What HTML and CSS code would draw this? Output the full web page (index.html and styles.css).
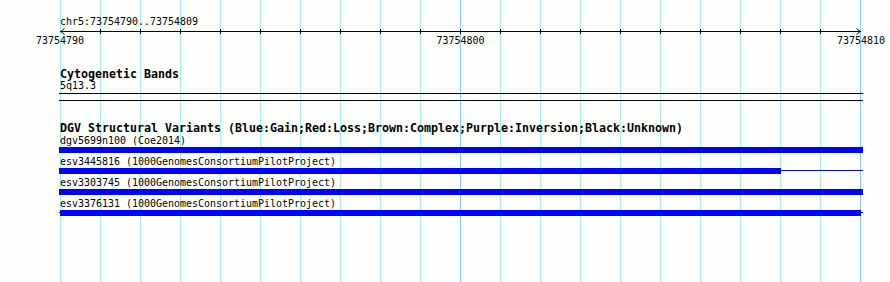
FILE: index.html
```html
<!DOCTYPE html>
<html lang="en">
<head>
  <meta charset="UTF-8" />
  <title>chr5:73754790..73754809</title>
  <meta name="viewport" content="width=device-width, initial-scale=1.0" />
  <link rel="stylesheet" href="styles.css">
</head>
<body>
  <div class="panel">
    <div class="grid">
      <div class="ruler">
        <div class="ruler-title">chr5:73754790..73754809</div>
        <svg class="ruler-axis" width="801" height="7" viewBox="0 0 801 7">
          <line x1="0" y1="3.5" x2="801" y2="3.5" stroke="#000" stroke-width="1" />
          <path id="ticks" d="" stroke="#000" stroke-width="1" fill="none" />
          <polyline points="4.5,0.5 0.8,3.5 4.5,6.5" stroke="#000" stroke-width="1" fill="none" />
          <polyline points="796.5,0.5 800.2,3.5 796.5,6.5" stroke="#000" stroke-width="1" fill="none" />
        </svg>
        <div class="ruler-labels">
          <span>73754790</span>
          <span>73754800</span>
          <span>73754810</span>
        </div>
      </div>

      <div class="track track-cyto">
        <div class="track-title">Cytogenetic Bands</div>
        <div class="feature-label">5q13.3</div>
        <div class="band"></div>
      </div>

      <div class="track track-dgv">
        <div class="track-title">DGV Structural Variants (Blue:Gain;Red:Loss;Brown:Complex;Purple:Inversion;Black:Unknown)</div>

        <div class="variant">
          <div class="variant-label">dgv5699n100 (Coe2014)</div>
          <div class="bar-row"><div class="bar" style="width:804px"></div></div>
        </div>
        <div class="variant">
          <div class="variant-label">esv3445816 (1000GenomesConsortiumPilotProject)</div>
          <div class="bar-row thin"><div class="bar" style="width:722px"></div></div>
        </div>
        <div class="variant">
          <div class="variant-label">esv3303745 (1000GenomesConsortiumPilotProject)</div>
          <div class="bar-row"><div class="bar" style="width:804px"></div></div>
        </div>
        <div class="variant">
          <div class="variant-label">esv3376131 (1000GenomesConsortiumPilotProject)</div>
          <div class="bar-row thin"><div class="bar" style="margin-left:1px;width:801px"></div></div>
        </div>
      </div>
    </div>
  </div>

  <script>
    // minor ticks every 40px between the two arrow ends
    let d = "";
    for (let x = 40; x < 800; x += 40) {
      d += "M" + (x + 0.5) + ",1 V6 ";
    }
    document.getElementById("ticks").setAttribute("d", d);
  </script>
</body>
</html>
```

FILE: styles.css
```css
body {
  margin: 0;
  background: #fdfffd;
  color: #000;
  font-family: 'DejaVu Sans Mono', 'Liberation Mono', monospace;
  font-size: 9.97px;
}

.panel {
  width: 890px;
  height: 282px;
  overflow: hidden;
}

.grid {
  margin-left: 60px;
  width: 801px;
  height: 282px;
  background-image:
    linear-gradient(#88ccf0, #88ccf0),
    linear-gradient(#88ccf0, #88ccf0),
    repeating-linear-gradient(to right, #a8eef0 0 1px, transparent 1px 40px);
  background-size: 1px 100%, 1px 100%, 100% 100%;
  background-position: 400px 0, 800px 0, 0 0;
  background-repeat: no-repeat;
}

.ruler {
  padding-top: 16px;
}

.ruler-title {
  line-height: 12px;
  white-space: nowrap;
}

.ruler-axis {
  display: block;
  overflow: visible;
}

.ruler-labels {
  display: flex;
  justify-content: space-between;
  margin-left: -24px;
  width: 849px;
  line-height: 12px;
}

.track-title {
  font-weight: bold;
  font-size: 11.63px;
  line-height: 12px;
  white-space: nowrap;
}

.track-cyto {
  margin-top: 21px;
}

.feature-label {
  line-height: 12px;
}

.band {
  margin-top: 1px;
  margin-left: -1px;
  width: 804px;
  height: 6px;
  border-top: 1px solid #000;
  border-bottom: 1px solid #000;
}

.track-dgv {
  margin-top: 21px;
}

.variant {
  margin-bottom: 2px;
}

.variant-label {
  line-height: 13px;
  white-space: nowrap;
}

.bar-row {
  display: flex;
  margin-left: -1px;
  width: 804px;
  height: 6px;
}

.bar-row.thin {
  background: linear-gradient(#0000ff, #0000ff) 0 2px / 100% 1px no-repeat;
}

.bar {
  height: 6px;
  background: #0000ff;
}
```
